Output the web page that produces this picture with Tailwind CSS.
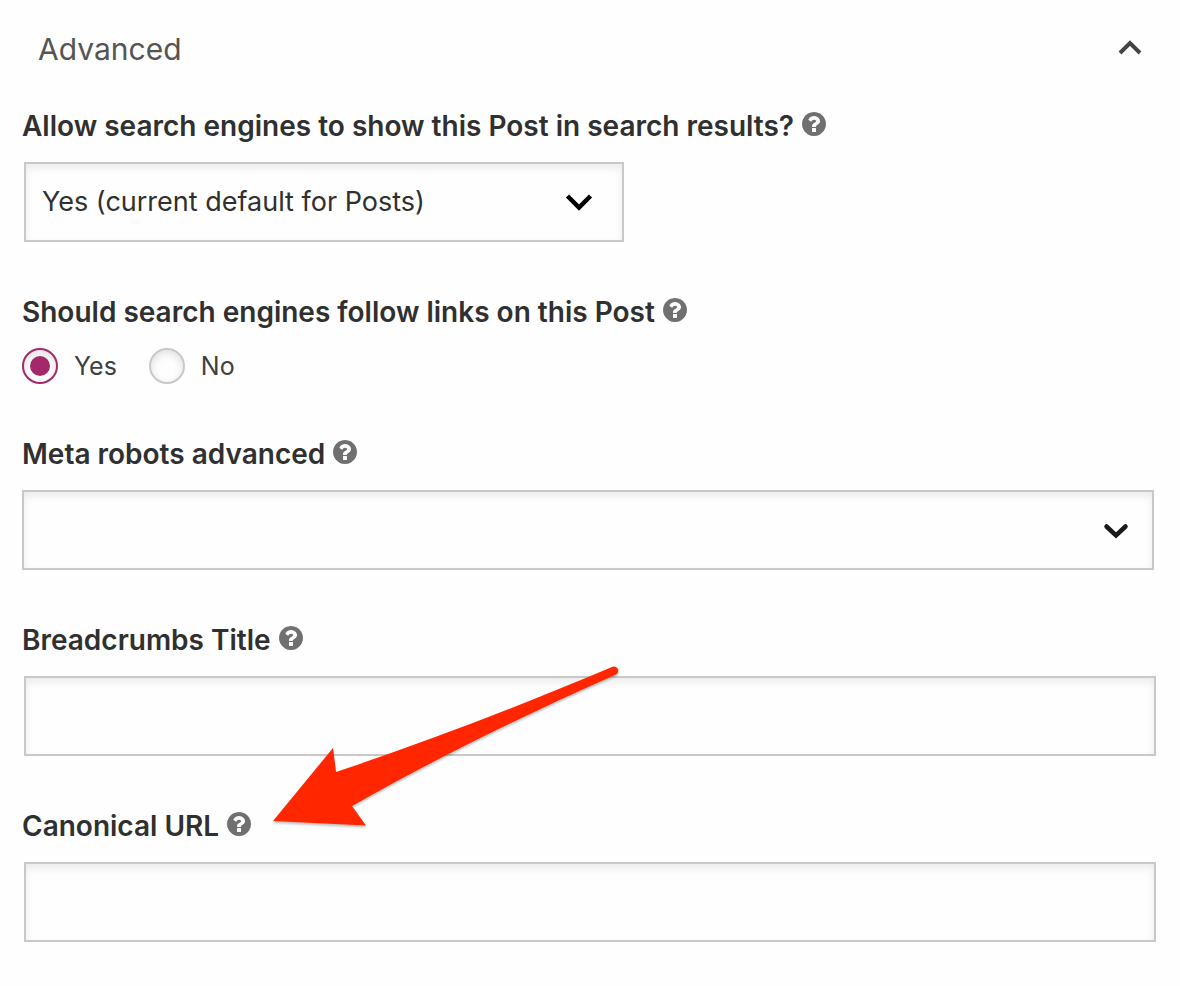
<!DOCTYPE html>
<html lang="en">
<head>
    <meta charset="UTF-8">
    <meta name="viewport" content="width=device-width, initial-scale=1.0">
    <title>Advanced</title>
    <script src="https://cdn.jsdelivr.net/npm/@tailwindcss/browser@4"></script>
</head>
<body class="bg-[#fefefe] min-h-screen font-['Inter',sans-serif] text-[#303030]">
    <!-- Shared help icon -->
    <svg class="hidden">
        <symbol id="help" viewBox="128 128 1536 1536">
            <path d="M1024 1376v-192q0-14-9-23t-23-9h-192q-14 0-23 9t-9 23v192q0 14 9 23t23 9h192q14 0 23-9t9-23zm256-672q0-88-55.500-163t-138.500-116-170-41q-243 0-371 213-15 24 8 42l132 100q7 6 19 6 16 0 25-12 53-68 86-92 34-24 86-24 48 0 85.500 26t37.500 59q0 38-20 61t-68 45q-63 28-115.500 86.500t-52.500 125.500v36q0 14 9 23t23 9h192q14 0 23-9t9-23q0-19 21.500-49.500t54.500-49.500q32-18 49-28.500t46-35 44.500-48 28-60.500 12.500-81zm384 192q0 209-103 385.500t-279.500 279.500-385.500 103-385.500-103-279.500-279.500-103-385.500 103-385.500 279.500-279.500 385.500-103 385.500 103 279.500 279.500 103 385.500z"/>
        </symbol>
    </svg>

    <h2>
        <button type="button" aria-expanded="true" class="w-full h-[98px] flex items-center justify-between pl-[38px] pr-9 text-[30px] text-[#555]">
            Advanced
            <svg class="w-7 h-7" viewBox="0 0 28 28" fill="none" stroke="#444" stroke-width="4"><path d="M4 18 14 8l10 10"/></svg>
        </button>
    </h2>

    <form class="pt-[10px] pl-[22px] pr-6 flex flex-col gap-[52px]">
        <!-- Search results -->
        <div class="flex flex-col gap-[18px]">
            <div class="flex items-center gap-2 h-9">
                <label for="noindex" class="text-[28px] leading-9 font-semibold">Allow search engines to show this Post in search results?</label>
                <button type="button" aria-label="Help" class="pb-1"><svg class="w-6 h-6 fill-[#707070]"><use href="#help"/></svg></button>
            </div>
            <div class="relative ml-0.5 w-[600px] max-w-full">
                <select id="noindex" class="appearance-none block w-full h-20 pl-4 pr-16 border-2 border-[#c8c8c8] bg-[#fefefe] text-[27px] shadow-[inset_0_4px_8px_rgba(0,0,0,0.08)]">
                    <option>Yes (current default for Posts)</option>
                </select>
                <svg class="absolute right-[30px] top-[26px] w-[30px] h-7 pointer-events-none" viewBox="0 0 30 28" fill="none" stroke="#000" stroke-width="4.500"><path d="M3.500 8 15 19.500 26.500 8"/></svg>
            </div>
        </div>

        <!-- Follow links -->
        <fieldset>
            <legend class="flex items-center gap-2 h-9">
                <span class="text-[28px] leading-9 font-semibold">Should search engines follow links on this Post</span>
                <button type="button" aria-label="Help" class="pb-1"><svg class="w-6 h-6 fill-[#707070]"><use href="#help"/></svg></button>
            </legend>
            <div class="mt-[18px] flex gap-8 text-[25px] leading-9 text-[#404040]">
                <label class="flex items-center gap-4">
                    <input type="radio" name="follow" checked class="appearance-none w-9 h-9 rounded-full border-2 border-[#c8c8c8] shadow-[inset_0_3px_8px_rgba(0,0,0,0.12)] flex items-center justify-center checked:border-[#a4286a] checked:before:block checked:before:w-5 checked:before:h-5 checked:before:rounded-full checked:before:bg-[#a4286a]">
                    Yes
                </label>
                <label class="flex items-center gap-4">
                    <input type="radio" name="follow" class="appearance-none w-9 h-9 rounded-full border-2 border-[#c8c8c8] shadow-[inset_0_3px_8px_rgba(0,0,0,0.12)] flex items-center justify-center checked:border-[#a4286a] checked:before:block checked:before:w-5 checked:before:h-5 checked:before:rounded-full checked:before:bg-[#a4286a]">
                    No
                </label>
            </div>
        </fieldset>

        <!-- Meta robots -->
        <div class="flex flex-col gap-[18px]">
            <div class="flex items-center gap-2 h-9">
                <label for="robots" class="text-[28px] leading-9 font-semibold">Meta robots advanced</label>
                <button type="button" aria-label="Help" class="pb-1"><svg class="w-6 h-6 fill-[#707070]"><use href="#help"/></svg></button>
            </div>
            <div class="relative mr-0.5">
                <select id="robots" class="appearance-none block w-full h-20 pl-4 pr-16 border-2 border-[#c8c8c8] bg-[#fefefe] text-[27px] shadow-[inset_0_4px_8px_rgba(0,0,0,0.08)]">
                    <option></option>
                </select>
                <svg class="absolute right-6 top-[26px] w-7 h-7 pointer-events-none" viewBox="0 0 28 28" fill="none" stroke="#1a1a1a" stroke-width="4.500" stroke-linecap="round"><path d="M4.500 10.500 14 19.500l9.500-9"/></svg>
            </div>
        </div>

        <!-- Breadcrumbs -->
        <div class="relative flex flex-col gap-[18px]">
            <div class="flex items-center gap-2 h-9">
                <label for="breadcrumbs" class="text-[28px] leading-9 font-semibold">Breadcrumbs Title</label>
                <button type="button" aria-label="Help" class="pb-1"><svg class="w-6 h-6 fill-[#707070]"><use href="#help"/></svg></button>
            </div>
            <div class="pl-0.5">
                <input id="breadcrumbs" type="text" class="block w-full h-20 px-4 border-2 border-[#c8c8c8] bg-[#fefefe] text-[27px] shadow-[inset_0_4px_8px_rgba(0,0,0,0.08)]">
            </div>
            <!-- Arrow pointing at the canonical field -->
            <svg class="absolute left-[238px] top-7 w-[380px] h-[190px] pointer-events-none drop-shadow-[0_2px_1px_rgba(0,0,0,0.25)]" viewBox="0 0 380 190" fill="#ff2600">
                <path d="M13 171 73 98l3 24C165 92 260 56 352 17a4 4 0 0 1 4 7.500C265 65 180 106 92 156l14 19.500Z"/>
            </svg>
        </div>

        <!-- Canonical -->
        <div class="flex flex-col gap-[18px]">
            <div class="flex items-center gap-2 h-9">
                <label for="canonical" class="text-[28px] leading-9 font-semibold">Canonical URL</label>
                <button type="button" aria-label="Help" class="pb-1"><svg class="w-6 h-6 fill-[#707070]"><use href="#help"/></svg></button>
            </div>
            <div class="pl-0.5">
                <input id="canonical" type="text" class="block w-full h-20 px-4 border-2 border-[#c8c8c8] bg-[#fefefe] text-[27px] shadow-[inset_0_4px_8px_rgba(0,0,0,0.08)]">
            </div>
        </div>
    </form>
</body>
</html>
